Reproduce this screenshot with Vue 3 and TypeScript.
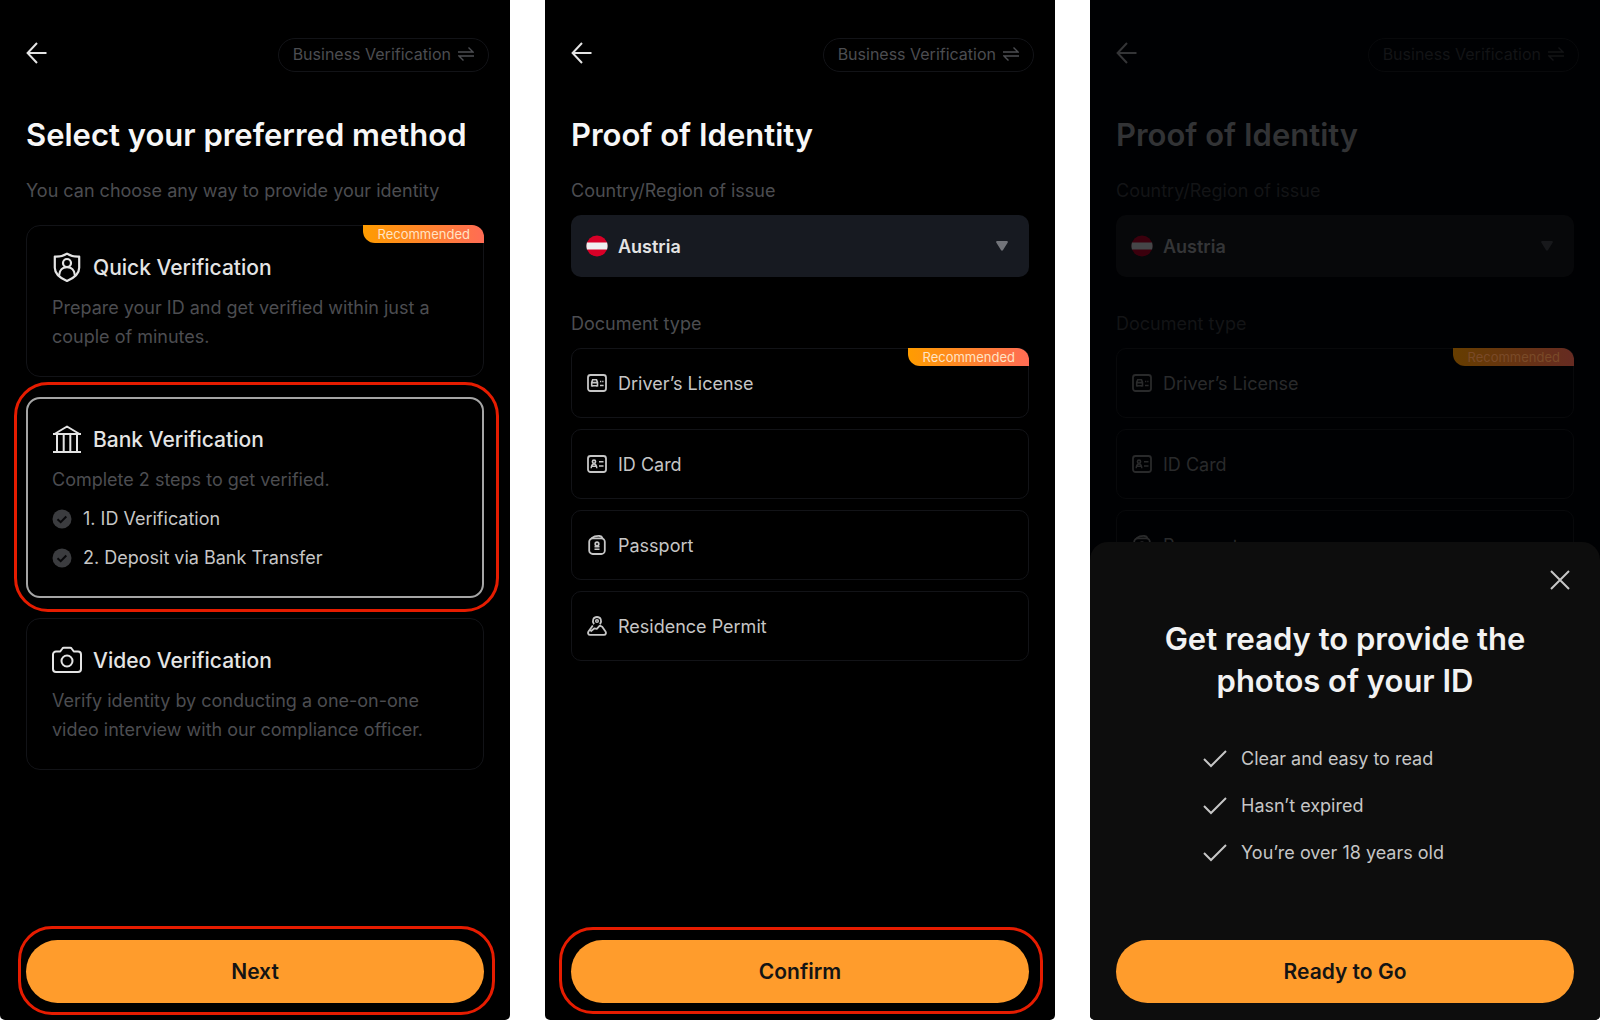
<script setup lang="ts">
import { ref } from 'vue'

interface DocumentType {
  id: string
  label: string
  recommended?: boolean
}

interface IdentityScreen {
  key: string
  dimmed: boolean
  documents: DocumentType[]
}

const documents: DocumentType[] = [
  { id: 'license', label: 'Driver’s License', recommended: true },
  { id: 'card', label: 'ID Card' },
  { id: 'passport', label: 'Passport' },
  { id: 'permit', label: 'Residence Permit' },
]

const screens: IdentityScreen[] = [
  { key: 'identity', dimmed: false, documents },
  { key: 'ready', dimmed: true, documents: documents.slice(0, 3) },
]

const steps = ['1. ID Verification', '2. Deposit via Bank Transfer']
const checklist = ['Clear and easy to read', 'Hasn’t expired', 'You’re over 18 years old']

const method = ref('bank')
const country = ref('Austria')
</script>

<template>
  <main class="board">
    <section class="screen">
      <header class="bar">
        <button class="icon-button" type="button" aria-label="Back">
          <svg width="22" height="22" viewBox="0 0 22 22" fill="none" stroke="currentColor" stroke-width="2">
            <path d="M20.500 11H1.600M11 1L1.600 11 11 21" />
          </svg>
        </button>
        <button class="pill" type="button">
          Business Verification
          <svg width="16" height="16" viewBox="0 0 16 16" fill="none" stroke="currentColor" stroke-width="1.400">
            <path d="M0 6h15L10.500 1.600M16 10H1l4.500 4.400" />
          </svg>
        </button>
      </header>

      <h1 class="title">Select your preferred method</h1>
      <p class="caption">You can choose any way to provide your identity</p>

      <div class="methods">
        <label class="card" :class="{ selected: method === 'quick' }">
          <input v-model="method" class="choice" type="radio" name="method" value="quick" />
          <span class="badge">Recommended</span>
          <span class="card-title">
            <svg width="30" height="30" viewBox="0 0 30 30" fill="none" stroke="currentColor" stroke-width="2.200">
              <path d="M15 1.600c3.600 2.300 8 3.200 12.200 3v11.200c0 6-5 10.200-12.200 13.200C7.800 26 2.800 21.800 2.800 15.800V4.600C7 4.800 11.400 3.900 15 1.600z" stroke-linejoin="round" />
              <circle cx="15" cy="11" r="4" />
              <path d="M7 23.500c.4-5.500 3.800-8.300 8-8.300s7.600 2.800 8 8.300" />
            </svg>
            Quick Verification
          </span>
          <span class="card-text">Prepare your ID and get verified within just a<br />couple of minutes.</span>
        </label>

        <label class="card" :class="{ selected: method === 'bank' }">
          <input v-model="method" class="choice" type="radio" name="method" value="bank" />
          <span class="card-title">
            <svg width="30" height="30" viewBox="0 0 30 30" fill="none" stroke="currentColor" stroke-width="2">
              <path d="M2.500 10L15 2.500 27.500 10z" stroke-linejoin="round" />
              <path d="M1 10h28M1 28h28M5 10v18M11.700 10v18M18.300 10v18M25 10v18" />
            </svg>
            Bank Verification
          </span>
          <span class="card-text">Complete 2 steps to get verified.</span>
          <span v-for="step in steps" :key="step" class="step">
            <svg width="20" height="20" viewBox="0 0 20 20" fill="none">
              <circle cx="10" cy="10" r="9.500" fill="#3b3c3f" />
              <path d="M5.500 10.200l3.200 3 5.600-5.700" stroke="#08080a" stroke-width="2" />
            </svg>
            {{ step }}
          </span>
          <span class="ring ring-card" aria-hidden="true"></span>
        </label>

        <label class="card" :class="{ selected: method === 'video' }">
          <input v-model="method" class="choice" type="radio" name="method" value="video" />
          <span class="card-title">
            <svg width="30" height="30" viewBox="0 0 30 30" fill="none" stroke="currentColor" stroke-width="2" stroke-linejoin="round">
              <path d="M4 6.500h4.200l2.200-3c.3-.5.8-.7 1.400-.7h6.400c.6 0 1.100.2 1.400.7l2.200 3H26a3 3 0 0 1 3 3V24a3 3 0 0 1-3 3H4a3 3 0 0 1-3-3V9.500a3 3 0 0 1 3-3z" />
              <circle cx="15" cy="16" r="5.500" />
            </svg>
            Video Verification
          </span>
          <span class="card-text">Verify identity by conducting a one-on-one<br />video interview with our compliance officer.</span>
        </label>
      </div>

      <div class="action">
        <button class="primary" type="button">Next</button>
        <span class="ring ring-next" aria-hidden="true"></span>
      </div>
    </section>

    <section v-for="screen in screens" :key="screen.key" class="screen" :class="{ dimmed: screen.dimmed }">
      <header class="bar">
        <button class="icon-button" type="button" aria-label="Back">
          <svg width="22" height="22" viewBox="0 0 22 22" fill="none" stroke="currentColor" stroke-width="2">
            <path d="M20.500 11H1.600M11 1L1.600 11 11 21" />
          </svg>
        </button>
        <button class="pill" type="button">
          Business Verification
          <svg width="16" height="16" viewBox="0 0 16 16" fill="none" stroke="currentColor" stroke-width="1.400">
            <path d="M0 6h15L10.500 1.600M16 10H1l4.500 4.400" />
          </svg>
        </button>
      </header>

      <h1 class="title">Proof of Identity</h1>
      <label class="caption" :for="`${screen.key}-country`">Country/Region of issue</label>
      <div class="select-box">
        <svg class="flag" width="22" height="22" viewBox="0 0 22 22">
          <circle class="flag-red" cx="11" cy="11" r="10.500" />
          <path class="flag-white" d="M.9 7.500h20.200c.6 2.300.6 4.700 0 7H.9c-.6-2.300-.6-4.700 0-7z" />
        </svg>
        <select :id="`${screen.key}-country`" v-model="country" class="select">
          <option>Austria</option>
        </select>
        <svg class="caret" width="12" height="10" viewBox="0 0 12 10">
          <path d="M1.200 0h9.600c.9 0 1.400 1 .8 1.800L6.900 9.200c-.4.600-1.400.600-1.800 0L.4 1.800C-.2 1 .3 0 1.200 0z" fill="currentColor" />
        </svg>
      </div>

      <fieldset class="documents">
        <legend class="caption">Document type</legend>
        <label v-for="doc in screen.documents" :key="doc.id" class="document">
          <input class="choice" type="radio" :name="`${screen.key}-document`" :value="doc.id" />
          <span v-if="doc.recommended" class="badge">Recommended</span>
          <svg width="20" height="20" viewBox="0 0 20 20" fill="none" stroke="currentColor" stroke-width="1.800">
            <g v-if="doc.id === 'license'">
              <rect x="1" y="2" width="18" height="16" rx="2.500" />
              <path d="M4.700 9.400l1-2.700h3.800l1 2.700v3.300H4.700zM4 9.600h7.200M5.400 12.500v1.300M9.800 12.500v1.300" stroke-width="1.600" />
              <path d="M13 8.400h1.300M15.200 8.400h1.300M13 12.600h3.600" stroke-width="1.500" />
            </g>
            <g v-else-if="doc.id === 'card'">
              <rect x="1" y="2" width="18" height="16" rx="2.500" />
              <circle cx="7" cy="7.700" r="1.600" stroke-width="1.600" />
              <path d="M4.200 14.200c.2-2.900 1.100-4.200 2.800-4.200s2.600 1.300 2.800 4.200M5 12.200h4" stroke-width="1.500" />
              <path d="M12 7.700h4.500M12 12h4.500" stroke-width="1.600" />
            </g>
            <g v-else-if="doc.id === 'passport'">
              <rect x="2.200" y="3.300" width="15.600" height="15.700" rx="3.500" />
              <path d="M4.500 3.200c2.300-1.700 5-2.400 8-2.200 1.500.1 2.600.9 3 2.200" />
              <circle cx="10" cy="9" r="1.800" stroke-width="1.700" />
              <path d="M7.500 11.800h5M7.500 14.300h5" stroke-width="1.500" />
            </g>
            <g v-else stroke-linejoin="round">
              <path d="M7 8.200C4.600 4.600 6.400 1 10 1s5.400 3.600 3 7.200" />
              <circle cx="10" cy="5" r="1.300" stroke-width="1.500" />
              <path d="M5.800 9.500l-4.300 6c-1 1.600-.2 3.300 1.500 3.300h14c1.700 0 2.500-1.700 1.500-3.300l-3.300-4.700-2.400-1.200-3 3.200-2.300-.5-4 3.200" />
            </g>
          </svg>
          {{ doc.label }}
        </label>
      </fieldset>

      <div v-if="!screen.dimmed" class="action">
        <button class="primary" type="button">Confirm</button>
        <span class="ring ring-confirm" aria-hidden="true"></span>
      </div>

      <div v-else class="sheet" role="dialog" aria-labelledby="sheet-title">
        <button class="close" type="button" aria-label="Close">
          <svg width="20" height="20" viewBox="0 0 20 20" fill="none" stroke="currentColor" stroke-width="2">
            <path d="M1 1l18 18M19 1L1 19" />
          </svg>
        </button>
        <h2 id="sheet-title" class="sheet-title">Get ready to provide the<br />photos of your ID</h2>
        <ul class="checklist">
          <li v-for="entry in checklist" :key="entry">
            <svg width="24" height="18" viewBox="0 0 24 18" fill="none" stroke="currentColor" stroke-width="2">
              <path d="M1 9l7 7L23 1" />
            </svg>
            {{ entry }}
          </li>
        </ul>
        <button class="primary" type="button">Ready to Go</button>
      </div>
    </section>
  </main>
</template>

<style>
body {
  margin: 0;
  background: #fff;
}
</style>

<style scoped>
.board {
  display: grid;
  grid-template-columns: repeat(3, minmax(0, 1fr));
  gap: 35px;
  min-height: 100vh;
  font-family: Inter, "Liberation Sans", sans-serif;
  font-size: 18px;
  line-height: 29px;
}

.board *,
.board *::before {
  box-sizing: border-box;
}

.screen {
  --heading: #f7f7f7;
  --strong: #e4e4e4;
  --text: #c6c6c6;
  --muted: #4c4d51;
  --line: #121317;
  --field: #171a21;
  --caret: #72747a;
  --flag-red: #d80027;
  --flag-white: #f0f0f0;
  --badge-from: #ff9c00;
  --badge-to: #ff6c55;
  --badge-text: #ffe3c4;
  position: relative;
  display: flex;
  flex-direction: column;
  padding: 38px 26px 17px;
  overflow: hidden;
  border-radius: 0 0 5px 5px;
  background: #000;
  color: var(--text);
}

.dimmed {
  --heading: #323335;
  --strong: #343537;
  --text: #292a2b;
  --muted: #131416;
  --line: #08090b;
  --field: #07080a;
  --caret: #17181b;
  --flag-red: #3b000d;
  --flag-white: #454648;
  --badge-from: #663d00;
  --badge-to: #662b22;
  --badge-text: #7a4a28;
  background: #000103;
}

button {
  border: 0;
  padding: 0;
  background: none;
  color: inherit;
  font: inherit;
}

svg {
  flex: none;
}

.bar {
  display: flex;
  align-items: center;
  justify-content: space-between;
  margin-right: -5px;
}

.icon-button {
  display: flex;
  padding-bottom: 4px;
  color: var(--strong);
}

.pill {
  display: flex;
  align-items: center;
  gap: 7px;
  height: 34px;
  padding: 0 14px 2px;
  border: 1px solid var(--line);
  border-radius: 17px;
  color: var(--muted);
  font-size: 16px;
}

.title,
.sheet-title {
  margin: 42px 0 20px;
  color: var(--heading);
  font-size: 31px;
  font-weight: 600;
  line-height: 42px;
}

.caption {
  margin: 0;
  padding: 0;
  color: var(--muted);
}

.methods {
  display: flex;
  flex-direction: column;
  gap: 20px;
  margin-top: 20px;
}

.card {
  position: relative;
  display: flex;
  flex-direction: column;
  gap: 10px;
  padding: 25px;
  border: 1px solid var(--line);
  border-radius: 14px;
}

.card.selected {
  padding: 24px;
  border: 2px solid #a5a5a5;
}

.choice {
  position: absolute;
  inset: 0;
  width: 100%;
  height: 100%;
  margin: 0;
  opacity: 0;
}

.card-title {
  display: flex;
  align-items: center;
  gap: 11px;
  height: 32px;
  color: var(--strong);
  font-size: 21px;
  font-weight: 500;
}

.card-text {
  color: var(--muted);
}

.step {
  display: flex;
  align-items: center;
  gap: 11px;
}

.badge {
  position: absolute;
  top: -1px;
  right: -1px;
  padding: 0 14px;
  border-radius: 0 12px 0 12px;
  background: linear-gradient(90deg, var(--badge-from), var(--badge-to));
  color: var(--badge-text);
  font-size: 13px;
  line-height: 18px;
}

.ring {
  position: absolute;
  border: 3px solid #e61c00;
  border-radius: 34px;
  pointer-events: none;
}

.ring-card {
  inset: -17px -17px -16px -14px;
}

.ring-next {
  inset: -14px -11px -12px -8px;
}

.ring-confirm {
  inset: -13px -14px -11px -12px;
}

.action {
  position: relative;
  margin-top: auto;
}

.primary {
  display: block;
  width: 100%;
  height: 63px;
  border-radius: 32px;
  background: #ff9c2c;
  color: #141414;
  font-size: 21px;
  font-weight: 600;
}

.select-box {
  position: relative;
  display: flex;
  align-items: center;
  margin: 10px 0 32px;
}

.select {
  width: 100%;
  height: 62px;
  padding: 0 47px;
  border: 0;
  border-radius: 10px;
  appearance: none;
  background: var(--field);
  color: var(--strong);
  font: inherit;
  font-weight: 600;
}

.flag {
  position: absolute;
  left: 15px;
}

.flag-red {
  fill: var(--flag-red);
}

.flag-white {
  fill: var(--flag-white);
}

.caret {
  position: absolute;
  right: 21px;
  color: var(--caret);
}

.documents {
  display: flex;
  flex-direction: column;
  gap: 11px;
  min-width: 0;
  margin: 0;
  border: 0;
  padding: 0;
}

.documents legend {
  margin-bottom: 10px;
}

.document {
  position: relative;
  display: flex;
  align-items: center;
  gap: 11px;
  height: 70px;
  padding: 0 15px;
  border: 1px solid var(--line);
  border-radius: 10px;
}

.sheet {
  position: absolute;
  inset: auto 0 0;
  display: flex;
  flex-direction: column;
  padding: 24px 26px 17px;
  border-radius: 18px 18px 0 0;
  background: #0d0d0d;
  color: #c6c6c6;
}

.close {
  display: flex;
  align-items: center;
  justify-content: center;
  align-self: flex-end;
  width: 28px;
  height: 28px;
}

.sheet-title {
  margin: 24px 0 42px;
  color: #f2f2f2;
  text-align: center;
}

.checklist {
  display: flex;
  flex-direction: column;
  gap: 18px;
  margin: 0 0 73px 87px;
  padding: 0;
  list-style: none;
}

.checklist li {
  display: flex;
  align-items: center;
  gap: 14px;
}
</style>
